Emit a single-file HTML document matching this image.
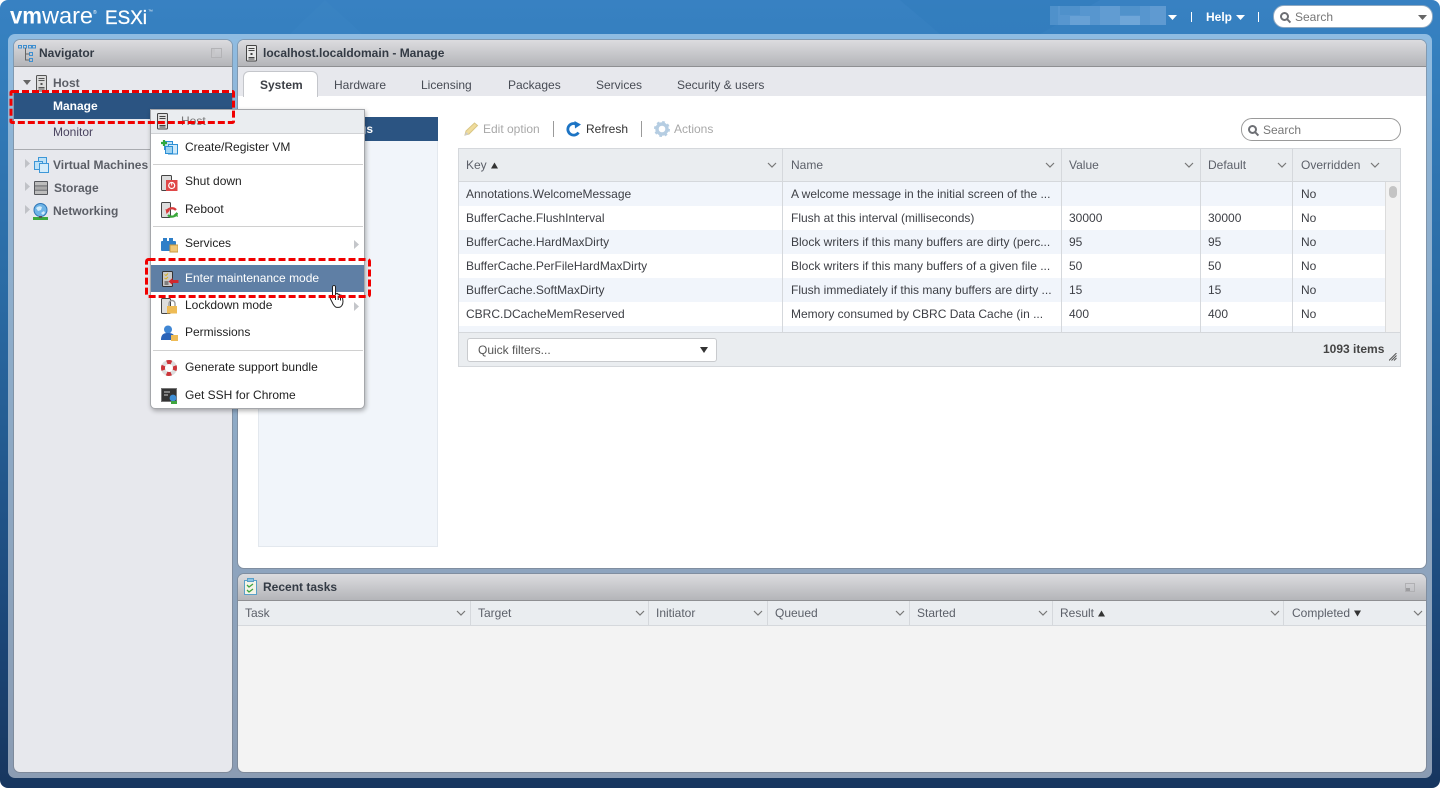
<!DOCTYPE html>
<html><head><meta charset="utf-8"><style>
html,body{margin:0;padding:0;background:#fff}
body{width:1440px;height:788px;position:relative;overflow:hidden;font:12px/14px "Liberation Sans",Arial,sans-serif;color:#333}
div,svg,span.a{position:absolute}
.t{position:absolute;white-space:nowrap;line-height:14px}
.hdr{background:linear-gradient(#dcdcdf,#b4b5b9);border-bottom:1px solid #8e8f92;box-sizing:border-box;border-radius:6px 6px 0 0}
.panel{background:#e7e8ed;border-radius:6px;overflow:hidden;box-shadow:0 0 0 1px rgba(110,115,125,.45)}
.nav{color:#5b5e66;font-weight:bold}
.cell{position:absolute;top:5px;white-space:nowrap;line-height:14px;color:#3d3f45}
.vl{position:absolute;width:1px;background:#d5d8dc}
.th{color:#5c6069}
.chev{position:absolute;width:10px;height:6px}
.mi{position:absolute;left:34px;white-space:nowrap;color:#222;line-height:14px}
.sep{position:absolute;left:2px;width:210px;height:1px;background:#d0d0d0}
</style></head><body>
<!-- window bg -->
<div style="left:0;top:0;width:1440px;height:788px;border-radius:8px;background:linear-gradient(#3881c2 0,#3580bf 40px,#2a6aa3 300px,#1d4a7c 600px,#17365f 788px);overflow:hidden">
<svg style="left:0;top:0" width="1440" height="34"><polygon points="290,34 325,0 362,34" fill="#4088c7" opacity=".3"/><polygon points="900,0 1100,0 1040,34 940,34" fill="#2f78ba" opacity=".35"/></svg>
</div>
<div style="left:8px;top:34px;width:1424px;height:744px;border-radius:7px;background:linear-gradient(#8fbce2 0,#8fb3d3 120px,#8ea6c0 500px,#8b9cb3 744px)"></div>

<!-- logo -->
<svg style="left:8px;top:4px" width="160" height="26">
<text x="2" y="19.500" font-family="Liberation Sans" font-size="23" font-weight="bold" fill="#fff" textLength="32" lengthAdjust="spacingAndGlyphs">vm</text>
<text x="34" y="19.500" font-family="Liberation Sans" font-size="23" fill="#fff" textLength="51" lengthAdjust="spacingAndGlyphs">ware</text>
<text x="85" y="10" font-family="Liberation Sans" font-size="5" fill="#fff">®</text>
<text x="97" y="20" font-family="Liberation Sans" font-size="19" fill="#fff" stroke="#fff" stroke-width=".3" textLength="42" lengthAdjust="spacingAndGlyphs">ESXi</text>
<text x="140" y="9" font-family="Liberation Sans" font-size="5" fill="#dfe9f3">™</text>
</svg>

<!-- top right -->
<svg style="left:1050px;top:6px" width="116" height="19"><rect width="116" height="19" fill="#5796cf"/><rect x="10" y="0" width="20" height="9" fill="#4f91cb"/><rect x="20" y="10" width="20" height="9" fill="#68a1d5"/><rect x="50" y="0" width="20" height="19" fill="#619cd2"/><rect x="70" y="0" width="20" height="9" fill="#5092cb"/><rect x="70" y="10" width="20" height="9" fill="#6fa6d8"/><rect x="100" y="0" width="16" height="19" fill="#5f9ad1"/><rect x="0" y="0" width="8" height="19" fill="#4f91cb"/></svg>
<svg style="left:1168px;top:15px" width="9" height="5"><polygon points="0,0 9,0 4.500,5" fill="#fff"/></svg>
<div style="left:1191px;top:12px;width:1px;height:10px;background:#fff"></div>
<div class="t" style="left:1206px;top:10px;color:#fff;font-weight:bold">Help</div>
<svg style="left:1236px;top:15px" width="9" height="5"><polygon points="0,0 9,0 4.500,5" fill="#fff"/></svg>
<div style="left:1258px;top:12px;width:1px;height:10px;background:#fff"></div>
<div style="left:1273px;top:5px;width:160px;height:23px;box-sizing:border-box;background:#fff;border:1px solid #8fa9c2;border-radius:11px"></div>
<svg style="left:1280px;top:12px" width="12" height="12" fill="none" stroke="#6d6f74" stroke-width="2"><circle cx="4.500" cy="4.500" r="3.500"/><path d="M7 7l3.400 3.600"/></svg>
<div class="t" style="left:1295px;top:10px;color:#777">Search</div>
<svg style="left:1418px;top:15px" width="9" height="5"><polygon points="0,0 9,0 4.500,5" fill="#666"/></svg>

<!-- Navigator -->
<div class="panel" style="left:14px;top:40px;width:218px;height:732px">
 <div class="hdr" style="left:0;top:0;width:218px;height:27px"></div>
 <div class="t" style="left:25px;top:6px;font-weight:bold;color:#333a44">Navigator</div>
 <div style="left:0;top:109px;width:218px;height:1px;background:#a9abb0"></div>
</div>
<svg style="left:18px;top:45px" width="18" height="17" fill="none" stroke="#3f8fd0" stroke-width="1"><rect x=".5" y=".5" width="3" height="2.500"/><rect x="5.500" y=".5" width="3" height="2.500"/><rect x="10.500" y=".5" width="3" height="2.500"/><rect x="14.500" y=".5" width="3" height="2.500"/><rect x="11.500" y="7.500" width="3" height="3"/><rect x="11.500" y="13.500" width="3" height="3"/><path d="M7.500 3v12h4M7.500 9h4" stroke="#666"/></svg>
<svg style="left:211px;top:48px" width="11" height="10"><rect x=".5" y=".5" width="10" height="9" fill="none" stroke="#b3b3b6"/><rect x="1" y="1" width="3" height="8" fill="#c6c6c9"/></svg>

<svg style="left:23px;top:80px" width="9" height="6"><polygon points="0,0 8,0 4,5" fill="#666"/></svg>
<svg style="left:36px;top:75px" width="11" height="17"><rect x=".5" y=".5" width="10" height="15.500" rx="1" fill="#dcdcdc" stroke="#555"/><path d="M2.500 3.500h6M2.500 5.500h6M2.500 12.500h6M2.500 14h6" stroke="#555"/><rect x="4.500" y="8" width="2" height="2" fill="#555"/></svg>
<div class="t nav" style="left:53px;top:76px">Host</div>
<div style="left:14px;top:93px;width:218px;height:26px;background:#2b5482"></div>
<div class="t" style="left:53px;top:99px;color:#fff;font-weight:bold">Manage</div>
<div class="t nav" style="left:53px;top:125px;font-weight:normal;color:#4a4460">Monitor</div>

<svg style="left:25px;top:159px" width="6" height="10"><polygon points="0,0 5,4.500 0,9" fill="#c0c2c7"/></svg>
<svg style="left:25px;top:182px" width="6" height="10"><polygon points="0,0 5,4.500 0,9" fill="#c0c2c7"/></svg>
<svg style="left:25px;top:205px" width="6" height="10"><polygon points="0,0 5,4.500 0,9" fill="#c0c2c7"/></svg>
<svg style="left:34px;top:157px" width="15" height="16"><rect x="4.500" y=".5" width="8" height="8" fill="#bfe2f7" stroke="#3d97d8"/><rect x=".5" y="4.500" width="8" height="8" fill="#bfe2f7" stroke="#3d97d8"/><rect x="5.500" y="6.500" width="9" height="9" fill="#d4ecfa" stroke="#3d97d8"/></svg>
<div class="t nav" style="left:53px;top:158px">Virtual Machines</div>
<svg style="left:34px;top:181px" width="14" height="14"><rect width="14" height="14" rx="1" fill="#55575c"/><rect x="1" y="1" width="12" height="3.500" fill="#bdbdbd"/><rect x="1" y="5.300" width="12" height="3.500" fill="#a9a9a9"/><rect x="1" y="9.600" width="12" height="3.400" fill="#bdbdbd"/></svg>
<div class="t nav" style="left:54px;top:181px">Storage</div>
<svg style="left:32px;top:203px" width="17" height="17"><circle cx="8.500" cy="7" r="6.500" fill="#6eb4e6" stroke="#2f77b8"/><path d="M4 5q3-3 6-1l-1 3-3 1zM9 10l3-2 1 2-2 2z" fill="#d4ecfa"/><rect x="1" y="14" width="15" height="3" fill="#3da93d"/><rect x="7" y="13" width="3" height="2" fill="#555"/></svg>
<div class="t nav" style="left:53px;top:204px">Networking</div>

<!-- Main panel -->
<div class="panel" style="left:238px;top:40px;width:1188px;height:528px;background:#fff">
 <div class="hdr" style="left:0;top:0;width:1188px;height:27px"></div>
 <div style="left:0;top:27px;width:1188px;height:29px;background:#e7e8ed"></div>
 <div style="left:5px;top:31px;width:75px;height:26px;box-sizing:border-box;background:#fff;border:1px solid #c4c6cb;border-bottom:none;border-radius:6px 6px 0 0"></div>
</div>
<svg style="left:246px;top:45px" width="11" height="17"><rect x=".5" y=".5" width="10" height="15.500" rx="1" fill="#e8e8e8" stroke="#444"/><path d="M2.500 3.500h6M2.500 5.500h6M2.500 12.500h6M2.500 14h6" stroke="#444"/><rect x="4.500" y="8" width="2" height="2" fill="#444"/></svg>
<div class="t" style="left:263px;top:46px;font-weight:bold;color:#333a44">localhost.localdomain - Manage</div>
<div class="t" style="left:260px;top:78px;font-weight:bold;color:#3c3f46">System</div>
<div class="t" style="left:334px;top:78px;color:#474b54">Hardware</div>
<div class="t" style="left:421px;top:78px;color:#474b54">Licensing</div>
<div class="t" style="left:508px;top:78px;color:#474b54">Packages</div>
<div class="t" style="left:596px;top:78px;color:#474b54">Services</div>
<div class="t" style="left:677px;top:78px;color:#474b54">Security &amp; users</div>

<!-- left list -->
<div style="left:258px;top:117px;width:180px;height:430px;box-sizing:border-box;background:#f1f5fa;border:1px solid #e3e8ee"></div>
<div style="left:258px;top:117px;width:180px;height:24px;background:#2b5482"></div>
<div class="t" style="left:262px;top:122px;width:111px;text-align:right;color:#fff;font-weight:bold">Advanced settings</div>

<!-- toolbar -->
<svg style="left:463px;top:122px" width="16" height="15" fill="none"><path d="M2 13l1-4L11.500 1l3 2.500L6 12z" fill="#f0dc9c" stroke="#d9c684"/><path d="M1.500 14l1.500-4 2.500 2z" fill="#ccc"/></svg>
<div class="t" style="left:483px;top:122px;color:#a8a8a8">Edit option</div>
<div style="left:553px;top:121px;width:1px;height:16px;background:#9a9a9a"></div>
<svg style="left:566px;top:121px" width="16" height="16" fill="none"><path d="M12.500 11.500A5.800 5.800 0 1 1 10 3" stroke="#1d74c4" stroke-width="2.800"/><polygon points="8.500,0 15,3.500 9,7.500" fill="#1d74c4"/></svg>
<div class="t" style="left:586px;top:122px;color:#333">Refresh</div>
<div style="left:641px;top:121px;width:1px;height:16px;background:#9a9a9a"></div>
<svg style="left:654px;top:121px" width="16" height="16"><circle cx="8" cy="8" r="5" fill="none" stroke="#b5cde2" stroke-width="3.400"/><circle cx="8" cy="8" r="6.800" fill="none" stroke="#b5cde2" stroke-width="2.400" stroke-dasharray="2.600 2.740"/></svg>
<div class="t" style="left:674px;top:122px;color:#a8a8a8">Actions</div>
<div style="left:1241px;top:118px;width:160px;height:23px;box-sizing:border-box;background:#fff;border:1px solid #9a9a9a;border-radius:11px"></div>
<svg style="left:1248px;top:125px" width="12" height="12" fill="none" stroke="#6d6f74" stroke-width="2"><circle cx="4.500" cy="4.500" r="3.500"/><path d="M7 7l3.400 3.600"/></svg>
<div class="t" style="left:1263px;top:123px;color:#777">Search</div>

<!-- table -->
<div style="left:458px;top:148px;width:943px;height:219px;box-sizing:border-box;border:1px solid #d5d8dc;background:#fff;overflow:hidden">
 <div style="left:0;top:0;width:941px;height:32px;background:#eaedf0;border-bottom:1px solid #d5d8dc"></div>
 <div style="left:0;top:33px;width:926px;height:24px;background:#f1f5fb"></div>
 <div style="left:0;top:81px;width:926px;height:24px;background:#f1f5fb"></div>
 <div style="left:0;top:129px;width:926px;height:24px;background:#f1f5fb"></div>
 <div style="left:0;top:177px;width:926px;height:6px;background:#f1f5fb"></div>
 <div style="left:926px;top:33px;width:15px;height:150px;box-sizing:border-box;background:#f2f2f2;border-left:1px solid #dcdcdc"></div>
 <div style="left:930px;top:37px;width:8px;height:12px;border-radius:4px;background:#c4c4c4"></div>
 <div style="left:0;top:183px;width:941px;height:34px;background:#eaedf0;border-top:1px solid #d5d8dc"></div>
 <div class="vl" style="left:323px;top:0;height:183px"></div>
 <div class="vl" style="left:602px;top:0;height:183px"></div>
 <div class="vl" style="left:741px;top:0;height:183px"></div>
 <div class="vl" style="left:833px;top:0;height:183px"></div>
</div>
<div class="t th" style="left:466px;top:158px">Key</div>
<svg style="left:491px;top:162px" width="8" height="7"><polygon points="0,6.500 7,6.500 3.500,.5" fill="#333"/></svg>
<div class="t th" style="left:791px;top:158px">Name</div>
<div class="t th" style="left:1069px;top:158px">Value</div>
<div class="t th" style="left:1208px;top:158px">Default</div>
<div class="t th" style="left:1301px;top:158px">Overridden</div>
<svg class="chev" style="left:767px;top:162px" viewBox="0 0 10 6"><path d="M1 1l4 4 4-4" fill="none" stroke="#777" stroke-width="1.200"/></svg>
<svg class="chev" style="left:1045px;top:162px" viewBox="0 0 10 6"><path d="M1 1l4 4 4-4" fill="none" stroke="#777" stroke-width="1.200"/></svg>
<svg class="chev" style="left:1184px;top:162px" viewBox="0 0 10 6"><path d="M1 1l4 4 4-4" fill="none" stroke="#777" stroke-width="1.200"/></svg>
<svg class="chev" style="left:1277px;top:162px" viewBox="0 0 10 6"><path d="M1 1l4 4 4-4" fill="none" stroke="#777" stroke-width="1.200"/></svg>
<svg class="chev" style="left:1370px;top:162px" viewBox="0 0 10 6"><path d="M1 1l4 4 4-4" fill="none" stroke="#777" stroke-width="1.200"/></svg>

<div class="cell" style="left:466px;top:187px">Annotations.WelcomeMessage</div><div class="cell" style="left:791px;top:187px">A welcome message in the initial screen of the ...</div><div class="cell" style="left:1301px;top:187px">No</div>
<div class="cell" style="left:466px;top:211px">BufferCache.FlushInterval</div><div class="cell" style="left:791px;top:211px">Flush at this interval (milliseconds)</div><div class="cell" style="left:1069px;top:211px">30000</div><div class="cell" style="left:1208px;top:211px">30000</div><div class="cell" style="left:1301px;top:211px">No</div>
<div class="cell" style="left:466px;top:235px">BufferCache.HardMaxDirty</div><div class="cell" style="left:791px;top:235px">Block writers if this many buffers are dirty (perc...</div><div class="cell" style="left:1069px;top:235px">95</div><div class="cell" style="left:1208px;top:235px">95</div><div class="cell" style="left:1301px;top:235px">No</div>
<div class="cell" style="left:466px;top:259px">BufferCache.PerFileHardMaxDirty</div><div class="cell" style="left:791px;top:259px">Block writers if this many buffers of a given file ...</div><div class="cell" style="left:1069px;top:259px">50</div><div class="cell" style="left:1208px;top:259px">50</div><div class="cell" style="left:1301px;top:259px">No</div>
<div class="cell" style="left:466px;top:283px">BufferCache.SoftMaxDirty</div><div class="cell" style="left:791px;top:283px">Flush immediately if this many buffers are dirty ...</div><div class="cell" style="left:1069px;top:283px">15</div><div class="cell" style="left:1208px;top:283px">15</div><div class="cell" style="left:1301px;top:283px">No</div>
<div class="cell" style="left:466px;top:307px">CBRC.DCacheMemReserved</div><div class="cell" style="left:791px;top:307px">Memory consumed by CBRC Data Cache (in ...</div><div class="cell" style="left:1069px;top:307px">400</div><div class="cell" style="left:1208px;top:307px">400</div><div class="cell" style="left:1301px;top:307px">No</div>

<div style="left:467px;top:338px;width:250px;height:24px;box-sizing:border-box;background:#fff;border:1px solid #c9cbce;border-radius:3px"></div>
<div class="t" style="left:478px;top:343px;color:#555">Quick filters...</div>
<svg style="left:700px;top:347px" width="8" height="6"><polygon points="0,0 8,0 4,6" fill="#333"/></svg>
<div class="t" style="left:1323px;top:342px;font-weight:bold;color:#444">1093 items</div>
<svg style="left:1389px;top:353px" width="8" height="8" stroke="#555" stroke-width="1"><path d="M0 7.500L7.500 0M2.500 7.500L7.500 2.500M5 7.500L7.500 5"/></svg>

<!-- Recent tasks -->
<div class="panel" style="left:238px;top:574px;width:1188px;height:198px;background:#f3f3f3">
 <div class="hdr" style="left:0;top:0;width:1188px;height:27px"></div>
 <div style="left:0;top:27px;width:1188px;height:25px;box-sizing:border-box;background:#eaedf0;border-bottom:1px solid #d5d8dc"></div>
 <div class="vl" style="left:232px;top:27px;height:25px"></div>
 <div class="vl" style="left:410px;top:27px;height:25px"></div>
 <div class="vl" style="left:529px;top:27px;height:25px"></div>
 <div class="vl" style="left:671px;top:27px;height:25px"></div>
 <div class="vl" style="left:814px;top:27px;height:25px"></div>
 <div class="vl" style="left:1045px;top:27px;height:25px"></div>
</div>
<svg style="left:244px;top:578px" width="14" height="17"><rect x=".5" y="2.500" width="12" height="14" fill="#f4f4e8" stroke="#5aa0c8"/><rect x="3.500" y=".5" width="6" height="3" fill="#8cc4e4" stroke="#5aa0c8"/><path d="M3 7l2 2 4-3M3 12l2 2 4-3" fill="none" stroke="#3fa33f" stroke-width="1.300"/></svg>
<div class="t" style="left:263px;top:580px;font-weight:bold;color:#333a44">Recent tasks</div>
<svg style="left:1405px;top:583px" width="10" height="9"><rect x=".5" y=".5" width="9" height="8" fill="none" stroke="#b0b0b3"/><rect x="1" y="5" width="4" height="3" fill="#9c9c9f"/></svg>
<div class="t th" style="left:245px;top:606px">Task</div>
<div class="t th" style="left:478px;top:606px">Target</div>
<div class="t th" style="left:656px;top:606px">Initiator</div>
<div class="t th" style="left:775px;top:606px">Queued</div>
<div class="t th" style="left:917px;top:606px">Started</div>
<div class="t th" style="left:1060px;top:606px">Result</div>
<svg style="left:1098px;top:610px" width="8" height="7"><polygon points="0,6.500 7,6.500 3.500,.5" fill="#333"/></svg>
<div class="t th" style="left:1292px;top:606px">Completed</div>
<svg style="left:1354px;top:610px" width="8" height="7"><polygon points="0,.5 7,.5 3.500,6.500" fill="#333"/></svg>
<svg class="chev" style="left:456px;top:610px" viewBox="0 0 10 6"><path d="M1 1l4 4 4-4" fill="none" stroke="#777" stroke-width="1.200"/></svg>
<svg class="chev" style="left:635px;top:610px" viewBox="0 0 10 6"><path d="M1 1l4 4 4-4" fill="none" stroke="#777" stroke-width="1.200"/></svg>
<svg class="chev" style="left:753px;top:610px" viewBox="0 0 10 6"><path d="M1 1l4 4 4-4" fill="none" stroke="#777" stroke-width="1.200"/></svg>
<svg class="chev" style="left:895px;top:610px" viewBox="0 0 10 6"><path d="M1 1l4 4 4-4" fill="none" stroke="#777" stroke-width="1.200"/></svg>
<svg class="chev" style="left:1038px;top:610px" viewBox="0 0 10 6"><path d="M1 1l4 4 4-4" fill="none" stroke="#777" stroke-width="1.200"/></svg>
<svg class="chev" style="left:1270px;top:610px" viewBox="0 0 10 6"><path d="M1 1l4 4 4-4" fill="none" stroke="#777" stroke-width="1.200"/></svg>
<svg class="chev" style="left:1413px;top:610px" viewBox="0 0 10 6"><path d="M1 1l4 4 4-4" fill="none" stroke="#777" stroke-width="1.200"/></svg>

<!-- Context menu -->
<div style="left:150px;top:109px;width:215px;height:300px;box-sizing:border-box;background:#fff;border:1px solid #a5a7ab;border-radius:0 0 5px 5px;box-shadow:1px 2px 5px rgba(0,0,0,.3)">
 <div style="left:0;top:0;width:213px;height:23px;background:#eaedf0;border-bottom:1px solid #d0d2d5"></div>
 <div class="sep" style="top:54px"></div>
 <div class="sep" style="top:116px"></div>
 <div class="sep" style="top:240px"></div>
 <div style="left:0;top:155px;width:213px;height:27px;background:#5f7fa5"></div>
</div>
<svg style="left:157px;top:113px" width="11" height="17"><rect x=".5" y=".5" width="10" height="15.500" rx="1" fill="#e0e0e0" stroke="#444"/><path d="M2.500 3.500h6M2.500 5.500h6M2.500 12.500h6M2.500 14h6" stroke="#444"/><rect x="4.500" y="8" width="2" height="2" fill="#444"/></svg>
<div class="t" style="left:181px;top:114px;color:#777">Host</div>
<svg style="left:161px;top:140px" width="17" height="15"><rect x="3.500" y="1.500" width="8" height="8" fill="#bfe2f7" stroke="#2c8fd5"/><rect x="7.500" y="4.500" width="9" height="9.500" fill="#cfeafa" stroke="#2c8fd5"/><rect x="4.500" y="6.500" width="7" height="7" fill="#9ed3f2" stroke="#2c8fd5"/><path d="M0 3h6M3 0v6" stroke="#2ea83f" stroke-width="2.200"/></svg>
<div class="mi" style="left:185px;top:140px">Create/Register VM</div>
<svg style="left:161px;top:175px" width="17" height="16"><rect x=".5" y=".5" width="10" height="15" rx="1" fill="#ddd" stroke="#444"/><rect x="5" y="5" width="11.500" height="11" fill="#e04848"/><circle cx="10.700" cy="10.500" r="3" fill="none" stroke="#fff" stroke-width="1.200"/><path d="M10.700 7.500v3" stroke="#fff"/></svg>
<div class="mi" style="left:185px;top:174px">Shut down</div>
<svg style="left:161px;top:202px" width="17" height="16"><rect x=".5" y=".5" width="9" height="15" rx="1" fill="#ddd" stroke="#444"/><path d="M6 9.500a5 4 0 0 1 9-1.500" fill="none" stroke="#d83a3a" stroke-width="2.200"/><polygon points="4.500,7 9,8.500 5.500,12" fill="#d83a3a"/><path d="M16 11a5 4 0 0 1-9 2" fill="none" stroke="#3aa83a" stroke-width="2.200"/><polygon points="17,15 12.500,13 16,10" fill="#3aa83a"/></svg>
<div class="mi" style="left:185px;top:202px">Reboot</div>
<svg style="left:161px;top:237px" width="17" height="16"><rect y="4" width="15" height="10" rx="1" fill="#2f7fc8"/><rect x="2" y="1" width="4" height="4" fill="#2f7fc8"/><rect x="8" y="1" width="4" height="4" fill="#2f7fc8"/><rect x="9" y="8" width="8" height="7" fill="#f0c878" stroke="#c89a40"/></svg>
<div class="mi" style="left:185px;top:236px">Services</div>
<svg style="left:354px;top:240px" width="6" height="10"><polygon points="0,0 5,4.500 0,9" fill="#c4c6ca"/></svg>
<svg style="left:162px;top:271px" width="17" height="16"><rect x=".5" y=".5" width="10" height="15" rx="1" fill="#c9c9c9" stroke="#333"/><path d="M2.500 3.500l1.500 1 2-2M2.500 7l1.500 1 2-2" stroke="#d8b020" fill="none"/><path d="M2.500 11h4M2.500 13h4" stroke="#333"/><polygon points="6.500,10.500 10.500,7 10.500,9 16.500,9 16.500,12 10.500,12 10.500,14" fill="#d0282e"/></svg>
<div class="t" style="left:185px;top:271px;color:#fff">Enter maintenance mode</div>
<svg style="left:161px;top:298px" width="17" height="16"><rect x=".5" y=".5" width="9" height="15" rx="1" fill="#ddd" stroke="#444"/><rect x="6" y="8" width="10" height="7.500" fill="#eebb55"/><path d="M8 8V5.500a3 3 0 0 1 6 0V8" fill="none" stroke="#999" stroke-width="1.400"/></svg>
<div class="mi" style="left:185px;top:298px">Lockdown mode</div>
<svg style="left:354px;top:302px" width="6" height="10"><polygon points="0,0 5,4.500 0,9" fill="#c4c6ca"/></svg>
<svg style="left:161px;top:325px" width="17" height="16"><circle cx="7" cy="4.500" r="4" fill="#3f86d4"/><path d="M0 15c0-6 3-7 7-7s7 1 7 7z" fill="#2a63b8"/><rect x="10" y="10" width="7" height="6" fill="#eebb55"/></svg>
<div class="mi" style="left:185px;top:325px">Permissions</div>
<svg style="left:161px;top:360px" width="16" height="16"><circle cx="8" cy="8" r="6" fill="none" stroke="#ddd" stroke-width="4"/><circle cx="8" cy="8" r="6" fill="none" stroke="#cc3338" stroke-width="4" stroke-dasharray="4.700 4.700" stroke-dashoffset="2.300"/></svg>
<div class="mi" style="left:185px;top:360px">Generate support bundle</div>
<svg style="left:161px;top:388px" width="17" height="16"><rect x=".5" y=".5" width="15" height="13" fill="#333" stroke="#777"/><path d="M3 4h6M3 7h4" stroke="#ccc"/><circle cx="12" cy="10" r="3.400" fill="#3f8fd6"/><rect x="10" y="13" width="6" height="3" fill="#3fa53f"/></svg>
<div class="mi" style="left:185px;top:388px">Get SSH for Chrome</div>

<!-- Cursor -->
<svg style="left:329px;top:284px" width="17" height="25"><path d="M3.500 2.500a1.600 1.600 0 0 1 3 0V11l.6-1.500c1-.6 2 0 2 1 .9-.6 2-.2 2.100 .9 1-.5 2-.1 2.200 1l.6 5c0 3-1.500 6-4.500 6H8c-2 0-3-2-4-3.500L1.500 15c-.8-1.500 .8-2.800 2-1.500z" fill="#fff" stroke="#222" stroke-width="1"/><path d="M6.500 12v4M9.200 12v4M11.500 12.500v4" stroke="#222" fill="none"/></svg>

<!-- Red highlights -->
<svg style="left:0;top:0" width="1440" height="788" fill="none" stroke="#f00000" stroke-width="3" stroke-dasharray="7 3"><rect x="11" y="91.500" width="222.500" height="31" rx="1"/><rect x="146.500" y="259.500" width="223" height="37" rx="2"/></svg>
</body></html>
